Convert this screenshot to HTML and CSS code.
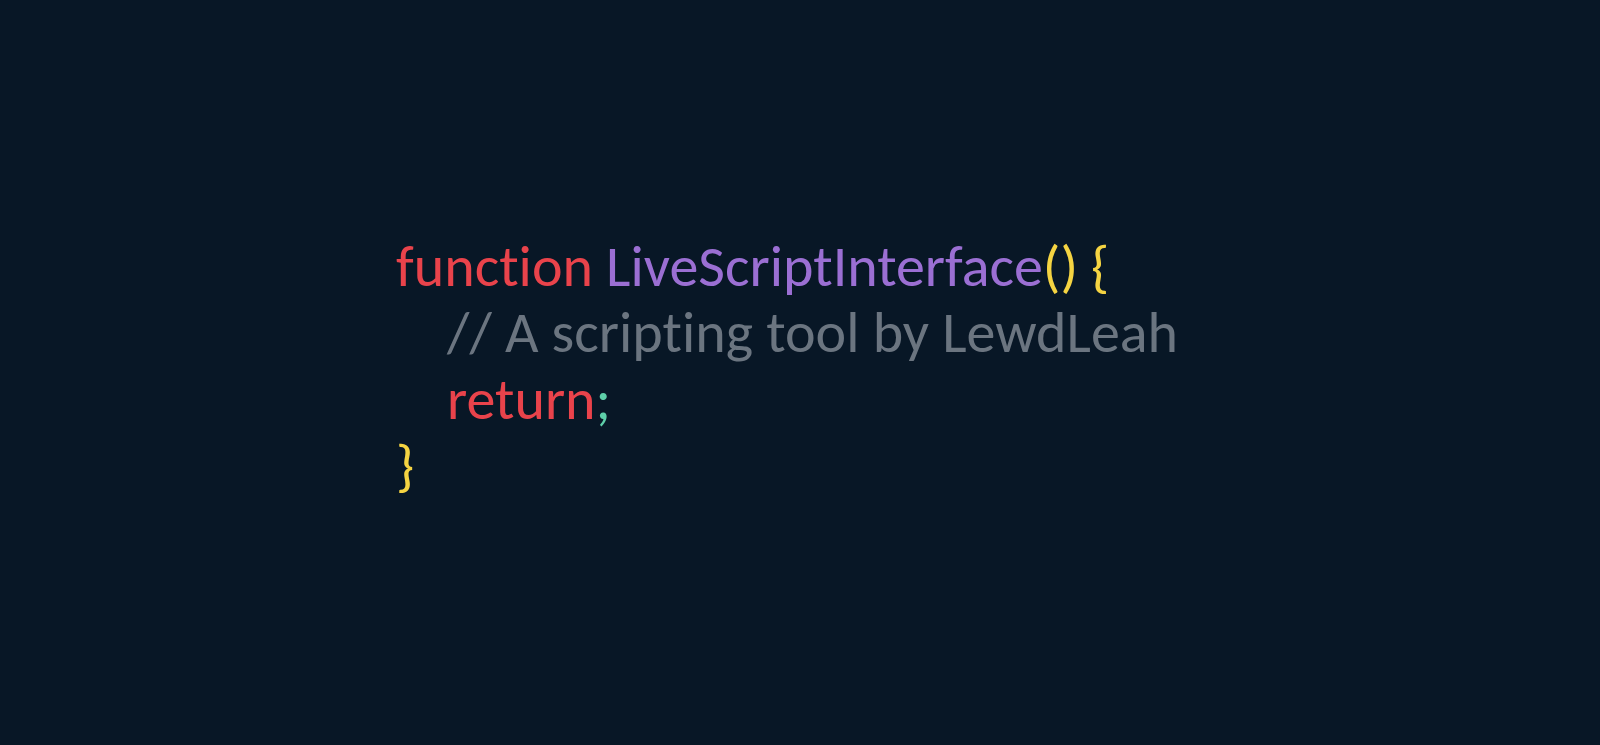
FILE: index.html
```html
<!DOCTYPE html>
<html>
<head>
<meta charset="utf-8">
<link rel="stylesheet" href="styles.css">
</head>
<body>
<main class="stage">
  <pre class="code"><span class="kw">function</span> <span class="fn">LiveScriptInterface</span><span class="br">()</span> <span class="br">{</span>
<span class="indent"></span><span class="cm">// A scripting tool by LewdLeah</span>
<span class="indent"></span><span class="kw">return</span><span class="pn">;</span>
<span class="br">}</span></pre>
</main>
</body>
</html>
```
FILE: styles.css
```css
html, body {
  margin: 0;
  padding: 0;
  background: #081726;
  height: 100%;
}
.stage {
  height: 745px;
  display: flex;
  align-items: center;
  padding-left: 396px;
  padding-bottom: 12px;
  box-sizing: border-box;
}
.code {
  margin: 0;
  font-family: Carlito, "Open Sans", sans-serif;
  font-size: 58px;
  line-height: 66.5px;
  font-variant-ligatures: none;
  font-feature-settings: "liga" 0;
  color: #6b7580;
  white-space: pre;
}
.indent {
  display: inline-block;
  width: 51px;
}
.kw { color: #e9434b; }
.fn { color: #9b6fd3; }
.br { color: #f5d442; }
.cm { color: #6b7580; }
.pn { color: #5ecfa9; }
```
